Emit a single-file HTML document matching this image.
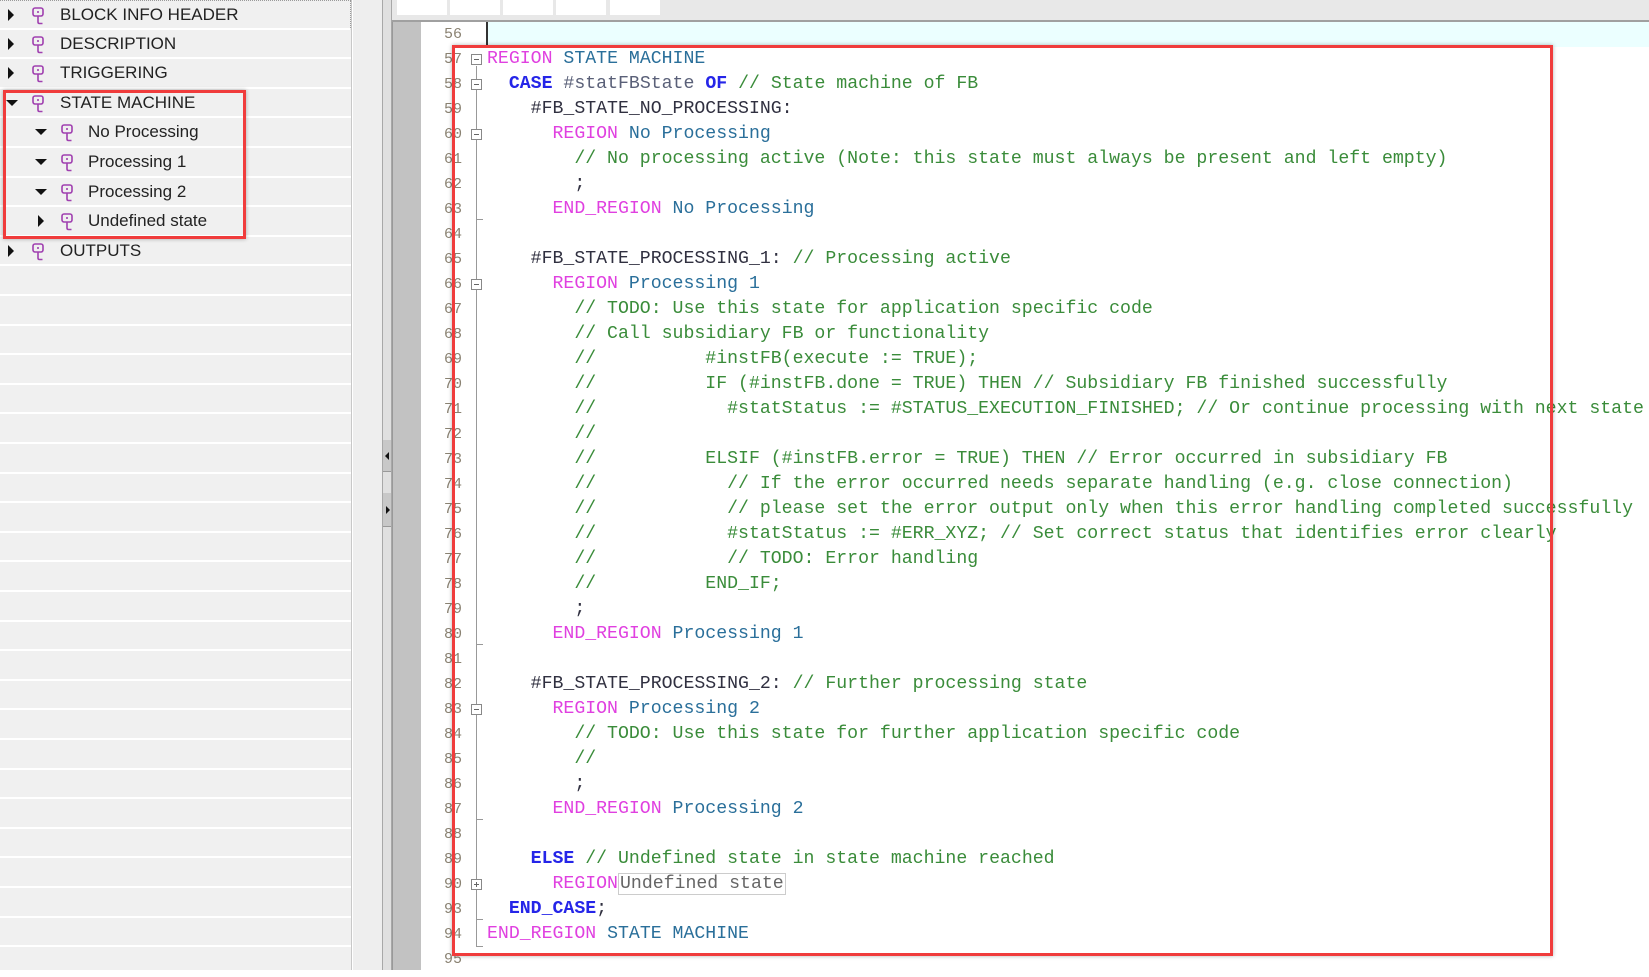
<!DOCTYPE html>
<html><head><meta charset="utf-8">
<style>
*{margin:0;padding:0;box-sizing:border-box}
body{width:1649px;height:970px;overflow:hidden;background:#fff;position:relative;font-family:"Liberation Sans",sans-serif}
.lp{position:absolute;left:0;top:0;width:352px;height:970px;background:#f0f0f0;border-right:1px solid #c8c8c8}
.row{position:absolute;left:0;width:351px;height:29.6px;border-bottom:2px solid #fff;font-size:17px;color:#222;line-height:28px}
.row .tri{position:absolute;top:0}
.row .ic{position:absolute;top:6px}
.row .tx{position:absolute;top:0}
.mid{position:absolute;left:353px;top:0;width:29px;height:970px;background:#eeeeee}
.spl{position:absolute;left:382px;top:0;width:10px;height:970px;background:#e0e0e0;border-left:1px solid #a8a8a8;border-right:1px solid #a8a8a8}
.g1{position:absolute;left:392px;top:22px;width:29px;height:948px;background:#c2c2c2;border-left:1px solid #999}
.top{position:absolute;left:392px;top:0;width:1257px;height:22px;background:#e8e8e8;border-bottom:2px solid #a0a0a0}
.tab{position:absolute;top:0;height:15px;width:50px;background:#fff}
.gut{position:absolute;left:421px;top:22px;width:66px;height:948px;background:#fff}
.cur{position:absolute;left:487px;top:22px;width:1162px;height:25px;background:#ebffff}
.cl{position:absolute;left:486px;top:22px;width:2px;height:25px;background:#333}
.nums{position:absolute;left:430px;top:22px;width:32px;text-align:right;font-family:"Liberation Mono",monospace;font-size:15px;line-height:25px;color:#8a8272}
pre{position:absolute;left:487px;top:22px;font-family:"Liberation Mono",monospace;font-size:18.2px;line-height:25px;color:#333;white-space:pre}
.r{color:#e040e0}.n{color:#2a6f9a}.k{color:#2525e8;font-weight:bold}.c{color:#3a8c3a}.v{color:#5a6078}.t{color:#303040}
.ub{border:1px solid #ccc;color:#666;padding:0 1px}
.box{position:absolute;border:3px solid #f03c3c;box-shadow:0 0 4px rgba(0,0,0,.3)}
.fold{position:absolute;width:11px;height:11px;border:1px solid #888;background:#fff;left:471px}
.fold:after{content:"";position:absolute;left:2px;top:4px;width:5px;height:1px;background:#666}
.fl{position:absolute;left:476px;width:1px;background:#999}
.tk{position:absolute;left:476px;width:7px;height:1px;background:#999}
</style></head><body>
<div class="lp">
 <div class="row" style="top:0;border-top:1px dotted #999;border-right:1px dotted #999"><svg class="tri" style="left:7px;top:7px" width="8" height="14"><path d="M1 1L7 7L1 13Z" fill="#111"/></svg><svg class="ic" style="left:32px" width="13" height="18"><rect x="1" y="1" width="10" height="8" rx="2" fill="none" stroke="#a040b0" stroke-width="1.6"/><path d="M6 4v2M6 9v6q0 1.5 1.5 1.5h3" fill="none" stroke="#a040b0" stroke-width="1.6"/></svg><span class="tx" style="left:60px">BLOCK INFO HEADER</span></div>
 <div class="row" style="top:29.6px"><svg class="tri" style="left:7px;top:7px" width="8" height="14"><path d="M1 1L7 7L1 13Z" fill="#111"/></svg><svg class="ic" style="left:32px" width="13" height="18"><rect x="1" y="1" width="10" height="8" rx="2" fill="none" stroke="#a040b0" stroke-width="1.6"/><path d="M6 4v2M6 9v6q0 1.5 1.5 1.5h3" fill="none" stroke="#a040b0" stroke-width="1.6"/></svg><span class="tx" style="left:60px">DESCRIPTION</span></div>
 <div class="row" style="top:59.2px"><svg class="tri" style="left:7px;top:7px" width="8" height="14"><path d="M1 1L7 7L1 13Z" fill="#111"/></svg><svg class="ic" style="left:32px" width="13" height="18"><rect x="1" y="1" width="10" height="8" rx="2" fill="none" stroke="#a040b0" stroke-width="1.6"/><path d="M6 4v2M6 9v6q0 1.5 1.5 1.5h3" fill="none" stroke="#a040b0" stroke-width="1.6"/></svg><span class="tx" style="left:60px">TRIGGERING</span></div>
 <div class="row" style="top:88.8px"><svg class="tri" style="left:5px;top:10px" width="14" height="8"><path d="M1 1L13 1L7 7Z" fill="#111"/></svg><svg class="ic" style="left:32px" width="13" height="18"><rect x="1" y="1" width="10" height="8" rx="2" fill="none" stroke="#a040b0" stroke-width="1.6"/><path d="M6 4v2M6 9v6q0 1.5 1.5 1.5h3" fill="none" stroke="#a040b0" stroke-width="1.6"/></svg><span class="tx" style="left:60px">STATE MACHINE</span></div>
 <div class="row" style="top:118.4px"><svg class="tri" style="left:34px;top:10px" width="14" height="8"><path d="M1 1L13 1L7 7Z" fill="#111"/></svg><svg class="ic" style="left:61px" width="13" height="18"><rect x="1" y="1" width="10" height="8" rx="2" fill="none" stroke="#a040b0" stroke-width="1.6"/><path d="M6 4v2M6 9v6q0 1.5 1.5 1.5h3" fill="none" stroke="#a040b0" stroke-width="1.6"/></svg><span class="tx" style="left:88px">No Processing</span></div>
 <div class="row" style="top:148px"><svg class="tri" style="left:34px;top:10px" width="14" height="8"><path d="M1 1L13 1L7 7Z" fill="#111"/></svg><svg class="ic" style="left:61px" width="13" height="18"><rect x="1" y="1" width="10" height="8" rx="2" fill="none" stroke="#a040b0" stroke-width="1.6"/><path d="M6 4v2M6 9v6q0 1.5 1.5 1.5h3" fill="none" stroke="#a040b0" stroke-width="1.6"/></svg><span class="tx" style="left:88px">Processing 1</span></div>
 <div class="row" style="top:177.6px"><svg class="tri" style="left:34px;top:10px" width="14" height="8"><path d="M1 1L13 1L7 7Z" fill="#111"/></svg><svg class="ic" style="left:61px" width="13" height="18"><rect x="1" y="1" width="10" height="8" rx="2" fill="none" stroke="#a040b0" stroke-width="1.6"/><path d="M6 4v2M6 9v6q0 1.5 1.5 1.5h3" fill="none" stroke="#a040b0" stroke-width="1.6"/></svg><span class="tx" style="left:88px">Processing 2</span></div>
 <div class="row" style="top:207.2px"><svg class="tri" style="left:37px;top:7px" width="8" height="14"><path d="M1 1L7 7L1 13Z" fill="#111"/></svg><svg class="ic" style="left:61px" width="13" height="18"><rect x="1" y="1" width="10" height="8" rx="2" fill="none" stroke="#a040b0" stroke-width="1.6"/><path d="M6 4v2M6 9v6q0 1.5 1.5 1.5h3" fill="none" stroke="#a040b0" stroke-width="1.6"/></svg><span class="tx" style="left:88px">Undefined state</span></div>
 <div class="row" style="top:236.8px"><svg class="tri" style="left:7px;top:7px" width="8" height="14"><path d="M1 1L7 7L1 13Z" fill="#111"/></svg><svg class="ic" style="left:32px" width="13" height="18"><rect x="1" y="1" width="10" height="8" rx="2" fill="none" stroke="#a040b0" stroke-width="1.6"/><path d="M6 4v2M6 9v6q0 1.5 1.5 1.5h3" fill="none" stroke="#a040b0" stroke-width="1.6"/></svg><span class="tx" style="left:60px">OUTPUTS</span></div>
 <div class="row" style="top:266.4px"></div><div class="row" style="top:296px"></div><div class="row" style="top:325.6px"></div><div class="row" style="top:355.2px"></div><div class="row" style="top:384.8px"></div><div class="row" style="top:414.4px"></div><div class="row" style="top:444px"></div><div class="row" style="top:473.6px"></div><div class="row" style="top:503.2px"></div><div class="row" style="top:532.8px"></div><div class="row" style="top:562.4px"></div><div class="row" style="top:592px"></div><div class="row" style="top:621.6px"></div><div class="row" style="top:651.2px"></div><div class="row" style="top:680.8px"></div><div class="row" style="top:710.4px"></div><div class="row" style="top:740px"></div><div class="row" style="top:769.6px"></div><div class="row" style="top:799.2px"></div><div class="row" style="top:828.8px"></div><div class="row" style="top:858.4px"></div><div class="row" style="top:888px"></div><div class="row" style="top:917.6px"></div><div class="row" style="top:947.2px"></div>
</div>
<div class="box" style="left:3px;top:90px;width:243px;height:149px"></div>
<div class="mid"></div>
<div class="spl"><div style="position:absolute;left:0;top:440px;width:8px;height:32px;background:#c8c8c8;border-bottom:1px solid #999"></div><svg style="position:absolute;left:1px;top:451px" width="6" height="10"><path d="M5 1L1 5L5 9Z" fill="#111"/></svg><div style="position:absolute;left:0;top:493px;width:8px;height:34px;background:#c8c8c8;border-bottom:1px solid #999"></div><svg style="position:absolute;left:2px;top:505px" width="6" height="10"><path d="M1 1L5 5L1 9Z" fill="#111"/></svg></div>
<div class="top"><div class="tab" style="left:5px"></div><div class="tab" style="left:58px"></div><div class="tab" style="left:111px"></div><div class="tab" style="left:164px"></div><div class="tab" style="left:218px"></div></div>
<div class="g1"></div>
<div class="gut"></div>
<div class="cur"></div>
<div class="cl"></div>
<div class="nums">56<br>57<br>58<br>59<br>60<br>61<br>62<br>63<br>64<br>65<br>66<br>67<br>68<br>69<br>70<br>71<br>72<br>73<br>74<br>75<br>76<br>77<br>78<br>79<br>80<br>81<br>82<br>83<br>84<br>85<br>86<br>87<br>88<br>89<br>90<br>93<br>94<br>95</div>
<div class="fl" style="top:66px;height:880px"></div>
<div class="fold" style="top:54px"></div><div class="fold" style="top:79px"></div><div class="fold" style="top:129px"></div><div class="fold" style="top:279px"></div><div class="fold" style="top:704px"></div>
<div class="fold" style="top:879px"><div style="position:absolute;left:4px;top:2px;width:1px;height:5px;background:#666"></div></div>
<div class="tk" style="top:219px"></div><div class="tk" style="top:644px"></div><div class="tk" style="top:819px"></div><div class="tk" style="top:919px"></div><div class="tk" style="top:946px"></div>
<pre>

<span class="r">REGION</span><span class="n"> STATE MACHINE</span>
<span class="k">  CASE</span><span class="v"> #statFBState </span><span class="k">OF</span><span class="c"> // State machine of FB</span>
<span class="t">    #FB_STATE_NO_PROCESSING:</span>
<span class="r">      REGION</span><span class="n"> No Processing</span>
<span class="c">        // No processing active (Note: this state must always be present and left empty)</span>
<span class="t">        ;</span>
<span class="r">      END_REGION</span><span class="n"> No Processing</span>

<span class="t">    #FB_STATE_PROCESSING_1:</span><span class="c"> // Processing active</span>
<span class="r">      REGION</span><span class="n"> Processing 1</span>
<span class="c">        // TODO: Use this state for application specific code</span>
<span class="c">        // Call subsidiary FB or functionality</span>
<span class="c">        //          #instFB(execute := TRUE);</span>
<span class="c">        //          IF (#instFB.done = TRUE) THEN // Subsidiary FB finished successfully</span>
<span class="c">        //            #statStatus := #STATUS_EXECUTION_FINISHED; // Or continue processing with next state</span>
<span class="c">        //</span>
<span class="c">        //          ELSIF (#instFB.error = TRUE) THEN // Error occurred in subsidiary FB</span>
<span class="c">        //            // If the error occurred needs separate handling (e.g. close connection)</span>
<span class="c">        //            // please set the error output only when this error handling completed successfully</span>
<span class="c">        //            #statStatus := #ERR_XYZ; // Set correct status that identifies error clearly</span>
<span class="c">        //            // TODO: Error handling</span>
<span class="c">        //          END_IF;</span>
<span class="t">        ;</span>
<span class="r">      END_REGION</span><span class="n"> Processing 1</span>

<span class="t">    #FB_STATE_PROCESSING_2:</span><span class="c"> // Further processing state</span>
<span class="r">      REGION</span><span class="n"> Processing 2</span>
<span class="c">        // TODO: Use this state for further application specific code</span>
<span class="c">        //</span>
<span class="t">        ;</span>
<span class="r">      END_REGION</span><span class="n"> Processing 2</span>

<span class="k">    ELSE</span><span class="c"> // Undefined state in state machine reached</span>
<span class="r">      REGION</span><span class="ub">Undefined state</span>
<span class="k">  END_CASE</span><span class="t">;</span>
<span class="r">END_REGION</span><span class="n"> STATE MACHINE</span>
</pre>
<div class="box" style="left:452px;top:45px;width:1101px;height:911px"></div>
</body></html>
